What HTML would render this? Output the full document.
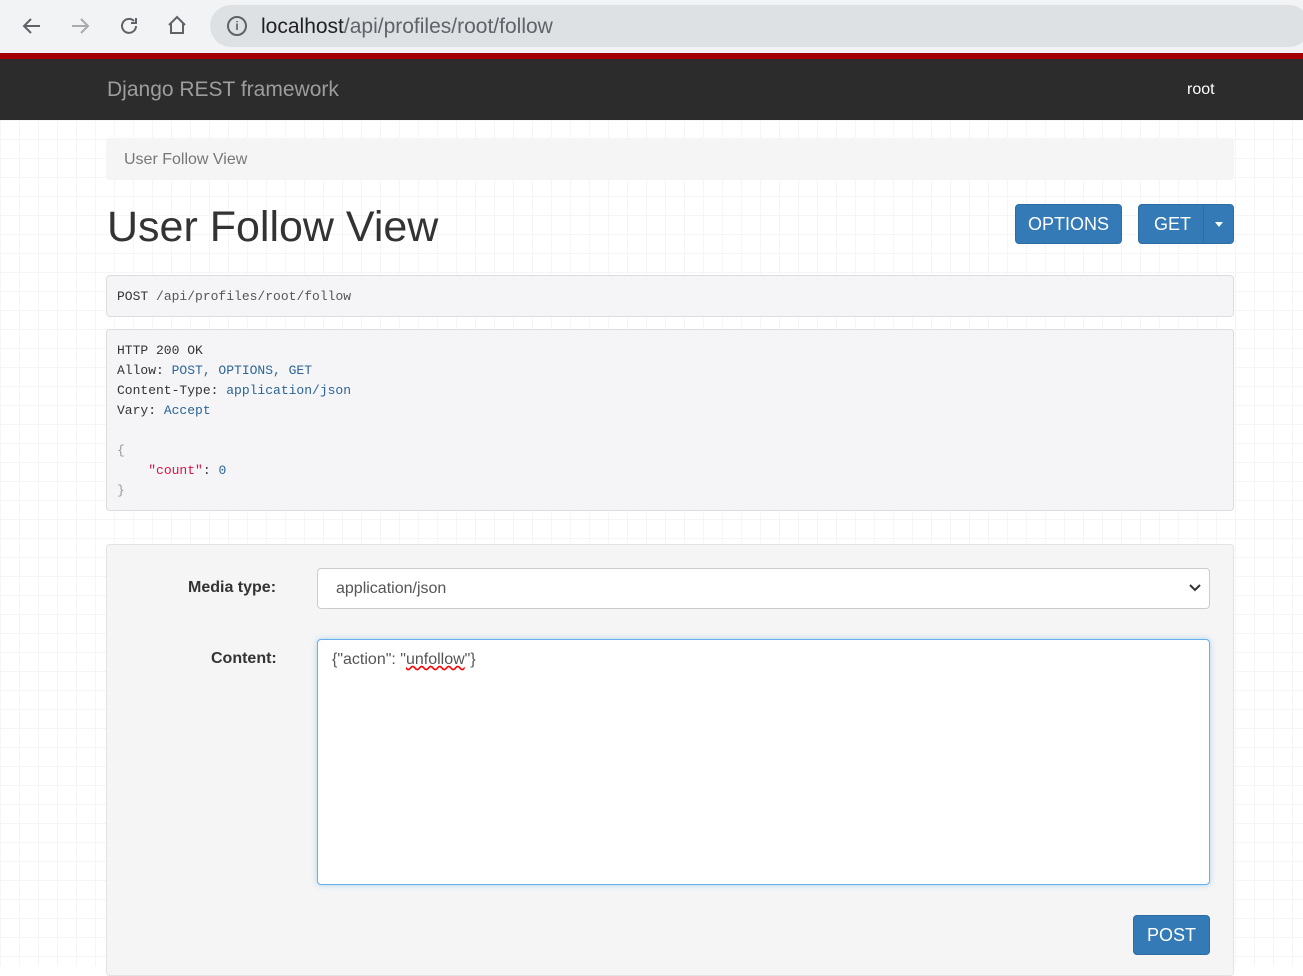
<!DOCTYPE html>
<html><head><style>
body{margin:0;width:1303px;height:966px;overflow:hidden;font-family:"Liberation Sans",sans-serif;background:#fff;position:relative}
.chrome{position:absolute;left:0;top:0;width:1303px;height:53px;background:#f1f3f4}
.url{position:absolute;left:210px;top:5px;width:1100px;height:42px;border-radius:21px;background:#dee1e4;font-size:21px;color:#5f6368;line-height:44px}
.red{position:absolute;top:53px;left:0;width:1303px;height:6px;background:#a30000}
.nav{position:absolute;top:59px;left:0;width:1303px;height:61px;background:#2c2c2c}
.bg{position:absolute;top:120px;left:0;width:1303px;height:846px;background-image:linear-gradient(#f5f5f5 1px,transparent 1px),linear-gradient(90deg,#f5f5f5 1px,transparent 1px);background-size:19px 19px}
.abs{position:absolute}
pre{margin:0;font-family:"Liberation Mono","DejaVu Sans Mono",monospace;font-size:13px;line-height:20px;color:#333}
.b{color:#2a6496}
.btn{position:absolute;background:#337ab7;border:1px solid #2e6da4;border-radius:4px;color:#fff;font-size:18px;text-align:center}
</style></head><body>
<div class="chrome">
<svg class="abs" style="left:20px;top:14px" width="24" height="24"><path d="M20 12H5M11 5l-7 7 7 7" stroke="#5f6368" stroke-width="2" fill="none"/></svg>
<svg class="abs" style="left:68px;top:14px" width="24" height="24"><path d="M4 12h15M13 5l7 7-7 7" stroke="#aaa" stroke-width="2" fill="none"/></svg>
<svg class="abs" style="left:117px;top:14px" width="24" height="24"><path d="M19 12a7 7 0 1 1-2-5M19 4v5h-5" stroke="#5f6368" stroke-width="2" fill="none"/></svg>
<svg class="abs" style="left:165px;top:13px" width="24" height="24"><path d="M4 12l8-8 8 8M6 10v10h12V10" stroke="#5f6368" stroke-width="2" fill="none"/></svg>
<div class="url"><span style="position:absolute;left:17px;top:11px;width:16px;height:16px;border:2px solid #5f6368;border-radius:50%;font-size:12px;line-height:16px;text-align:center;font-weight:bold">i</span><span style="position:absolute;left:51px"><span style="color:#202124">localhost</span>/api/profiles/root/follow</span></div>
</div>
<div class="red"></div>
<div class="nav"><span class="abs" style="left:107px;top:19px;font-size:21px;color:#9d9d9d">Django REST framework</span><span class="abs" style="left:1187px;top:22px;font-size:16px;color:#fff">root</span></div>
<div class="bg"></div>
<div class="abs" style="left:106px;top:138px;width:1128px;height:42px;background:#f5f5f5;border-radius:4px"><span class="abs" style="left:18px;top:13px;font-size:16px;color:#777">User Follow View</span></div>
<div class="abs" style="left:107px;top:203px;font-size:43px;color:#333">User Follow View</div>
<div class="btn" style="left:1015px;top:204px;width:105px;height:38px;line-height:38px">OPTIONS</div>
<div class="btn" style="left:1138px;top:204px;width:94px;height:38px;line-height:38px"><span style="position:absolute;left:15px">GET</span><span style="position:absolute;left:64px;top:0;height:38px;border-left:1px solid #2e6da4"></span><span style="position:absolute;left:76px;top:17px;border:4px solid transparent;border-top:5px solid #fff"></span></div>
<div class="abs" style="left:106px;top:275px;width:1106px;height:20px;padding:10px;background:#f5f5f7;border:1px solid #ddd;border-radius:4px"><pre style="line-height:22px">POST <span style="color:#555">/api/profiles/root/follow</span></pre></div>
<div class="abs" style="left:106px;top:329px;width:1106px;height:160px;padding:10px;background:#f5f5f7;border:1px solid #ddd;border-radius:4px"><pre style="padding-top:1px">HTTP 200 OK
Allow: <span class="b">POST, OPTIONS, GET</span>
Content-Type: <span class="b">application/json</span>
Vary: <span class="b">Accept</span>

<span style="color:#999">{</span>
    <span style="color:#dd1144">"count"</span>: <span class="b">0</span>
<span style="color:#999">}</span></pre></div>
<div class="abs" style="left:106px;top:544px;width:1126px;height:430px;background:#f5f5f5;border:1px solid #e3e3e3;border-radius:4px">
<div class="abs" style="left:81px;top:34px;font-size:16px;font-weight:bold;color:#333">Media type:</div>
<div class="abs" style="left:210px;top:23px;width:891px;height:39px;background:#fff;border:1px solid #ccc;border-radius:4px"><span class="abs" style="left:18px;top:11px;font-size:16px;color:#555">application/json</span><svg class="abs" style="left:870px;top:14px" width="14" height="10"><path d="M2 2l5 5 5-5" stroke="#333" stroke-width="2" fill="none"/></svg></div>
<div class="abs" style="left:104px;top:105px;font-size:16px;font-weight:bold;color:#333">Content:</div>
<div class="abs" style="left:210px;top:94px;width:891px;height:244px;background:#fff;border:1px solid #66afe9;border-radius:4px;box-shadow:0 0 6px rgba(102,175,233,.5)"><span class="abs" style="left:14px;top:11px;font-size:16px;color:#555">{"action": "<span style="text-decoration:underline wavy red">unfollow</span>"}</span></div>
<div class="btn" style="left:1026px;top:370px;width:75px;height:38px;line-height:38px">POST</div>
</div>
</body></html>
